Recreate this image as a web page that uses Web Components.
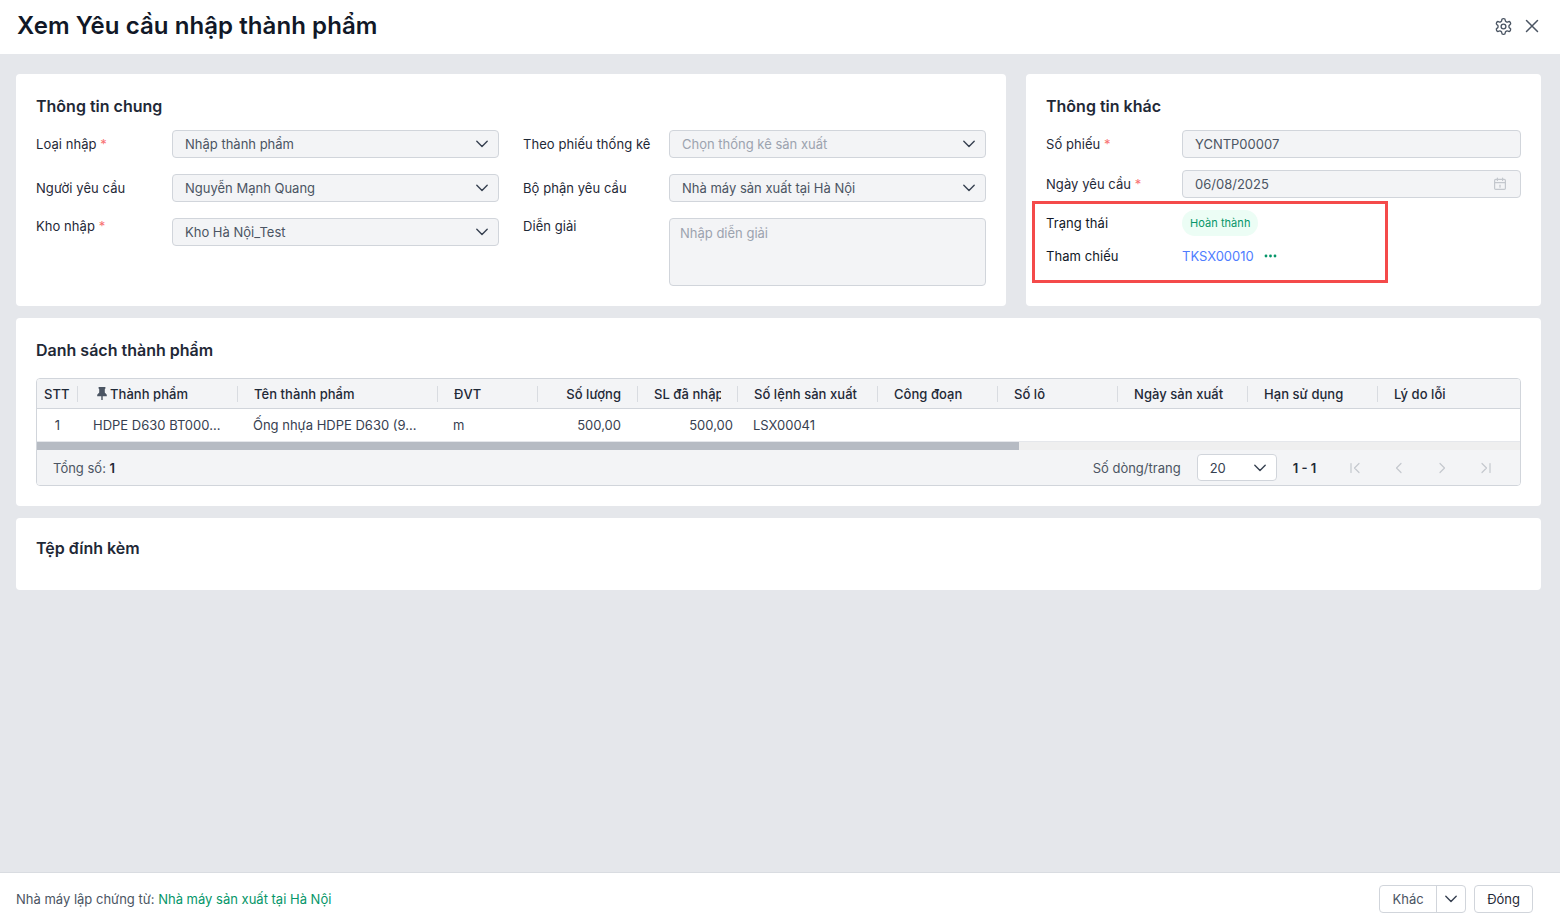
<!DOCTYPE html>
<html lang="vi">
<head>
    <meta charset="UTF-8">
    <title>Xem Yêu cầu nhập thành phẩm</title>
    <style>
        html, body {
            margin: 0;
            height: 922px;
            overflow: hidden;
        }
        body {
            background-color: #e5e7eb;
            color: #1f2937;
            font: 13px/20px Inter, "Noto Sans", "Liberation Sans", sans-serif;
            display: flex;
            flex-direction: column;
        }
        main {
            flex: 1;
            display: flex;
            flex-direction: column;
            gap: 12px;
            padding: 20px 19px 0 16px;
        }
        .top {
            display: flex;
            gap: 20px;
        }
        .grow { flex: 1; }
    </style>
    <script>
        const chevron = `<svg width="14" height="14" viewBox="0 0 14 14" fill="none" stroke="#374151" stroke-width="1.4" stroke-linecap="round" stroke-linejoin="round"><path d="M1.8 4.2 7 9.4l5.2-5.2"/></svg>`;

        class AppHeader extends HTMLElement {
            constructor() {
                super().attachShadow({mode: 'open'});
            }

            connectedCallback() {
                this.shadowRoot.innerHTML = `
                    <style>
                        :host {
                            display: flex;
                            align-items: center;
                            justify-content: space-between;
                            box-sizing: border-box;
                            height: 54px;
                            flex: none;
                            padding: 0 20px 2px 17px;
                            background: #fff;
                        }
                        h1 {
                            margin: 0;
                            font-size: 24px;
                            line-height: 32px;
                            font-weight: 600;
                            letter-spacing: .07px;
                            color: #111827;
                        }
                        div { display: flex; align-items: center; gap: 11px; }
                        svg { display: block; }
                    </style>
                    <h1><slot></slot></h1>
                    <div>
                        <svg width="19" height="19" viewBox="0 0 24 24" fill="none" stroke="#4b5563" stroke-width="1.7" stroke-linecap="round" stroke-linejoin="round">
                            <path d="M12.22 2h-.44a2 2 0 0 0-2 2v.18a2 2 0 0 1-1 1.73l-.43.25a2 2 0 0 1-2 0l-.15-.08a2 2 0 0 0-2.73.73l-.22.38a2 2 0 0 0 .73 2.73l.15.1a2 2 0 0 1 1 1.72v.51a2 2 0 0 1-1 1.74l-.15.09a2 2 0 0 0-.73 2.73l.22.38a2 2 0 0 0 2.73.73l.15-.08a2 2 0 0 1 2 0l.43.25a2 2 0 0 1 1 1.73V20a2 2 0 0 0 2 2h.44a2 2 0 0 0 2-2v-.18a2 2 0 0 1 1-1.73l.43-.25a2 2 0 0 1 2 0l.15.08a2 2 0 0 0 2.73-.73l.22-.39a2 2 0 0 0-.73-2.73l-.15-.08a2 2 0 0 1-1-1.74v-.5a2 2 0 0 1 1-1.74l.15-.09a2 2 0 0 0 .73-2.73l-.22-.38a2 2 0 0 0-2.73-.73l-.15.08a2 2 0 0 1-2 0l-.43-.25a2 2 0 0 1-1-1.73V4a2 2 0 0 0-2-2z"/>
                            <circle cx="12" cy="12" r="3"/>
                        </svg>
                        <svg width="16" height="16" viewBox="0 0 16 16" fill="none" stroke="#4b5563" stroke-width="1.5" stroke-linecap="round"><path d="M2.500 2.500l11 11M13.500 2.500l-11 11"/></svg>
                    </div>`;
            }
        }
        customElements.define('app-header', AppHeader);

        class FormCard extends HTMLElement {
            constructor() {
                super().attachShadow({mode: 'open'});
            }

            connectedCallback() {
                this.shadowRoot.innerHTML = `
                    <style>
                        :host {
                            display: block;
                            position: relative;
                            box-sizing: border-box;
                            padding: 20px;
                            background: #fff;
                            border-radius: 4px;
                        }
                        h2 {
                            margin: 0 0 var(--head-gap, 12px);
                            font-size: 16px;
                            line-height: 24px;
                            font-weight: 600;
                            color: #1f2937;
                        }
                    </style>
                    <h2>${this.getAttribute('heading')}</h2>
                    <slot></slot>`;
            }
        }
        customElements.define('form-card', FormCard);

        class FieldRow extends HTMLElement {
            constructor() {
                super().attachShadow({mode: 'open'});
            }

            connectedCallback() {
                const req = this.hasAttribute('required') ? ' <i>*</i>' : '';
                const top = this.hasAttribute('top');
                this.shadowRoot.innerHTML = `
                    <style>
                        :host {
                            display: flex;
                            align-items: ${top ? 'flex-start' : 'center'};
                        }
                        label {
                            flex: none;
                            width: var(--label-width, 136px);
                            margin-top: ${top ? '-2px' : '0'};
                            color: var(--label-color, #1f2937);
                            letter-spacing: .06px;
                            white-space: nowrap;
                        }
                        i { font-style: normal; color: #f87171; letter-spacing: 0; }
                        div { flex: 1; min-width: 0; }
                    </style>
                    <label>${this.getAttribute('label')}${req}</label>
                    <div><slot></slot></div>`;
            }
        }
        customElements.define('field-row', FieldRow);

        class SelectBox extends HTMLElement {
            constructor() {
                super().attachShadow({mode: 'open'});
            }

            connectedCallback() {
                const icon = this.getAttribute('icon');
                let right = chevron;
                if (icon === 'none') right = '';
                if (icon === 'date') {
                    right = `<svg style="margin-right:4px" width="14" height="14" viewBox="0 0 14 14" fill="none" stroke="#c3c7cd" stroke-width="1.2" stroke-linecap="round"><rect x="1.600" y="2.400" width="10.800" height="10" rx="1.200"/><path d="M1.600 5.600h10.800M4.400 1v2.400M9.600 1v2.400"/><path d="M7 8.200v2"/></svg>`;
                }
                this.shadowRoot.innerHTML = `
                    <style>
                        :host {
                            display: flex;
                            align-items: center;
                            justify-content: space-between;
                            box-sizing: border-box;
                            height: 28px;
                            padding: 0 9px 0 12px;
                            background: #f3f4f6;
                            border: 1px solid #d1d5db;
                            border-radius: 4px;
                            color: #4b5563;
                        }
                        :host([placeholder]) { color: #9ca3af; }
                        svg { display: block; }
                    </style>
                    <span><slot></slot></span>${right}`;
            }
        }
        customElements.define('select-box', SelectBox);

        class TextBlock extends HTMLElement {
            constructor() {
                super().attachShadow({mode: 'open'}).innerHTML = `
                    <style>
                        :host {
                            display: block;
                            box-sizing: border-box;
                            height: 68px;
                            padding: 4px 10px;
                            background: #f3f4f6;
                            border: 1px solid #d1d5db;
                            border-radius: 4px;
                            color: #9ca3af;
                        }
                    </style>
                    <slot></slot>`;
            }
        }
        customElements.define('text-block', TextBlock);

        class StatusBadge extends HTMLElement {
            constructor() {
                super().attachShadow({mode: 'open'}).innerHTML = `
                    <style>
                        :host {
                            display: inline-flex;
                            align-items: center;
                            height: 26px;
                            padding: 0 8px;
                            border-radius: 13px;
                            background: #ecfdf5;
                            color: #059669;
                            font-size: 11px;
                            letter-spacing: .05px;
                            vertical-align: top;
                        }
                    </style>
                    <slot></slot>`;
            }
        }
        customElements.define('status-badge', StatusBadge);

        class RefLink extends HTMLElement {
            constructor() {
                super().attachShadow({mode: 'open'}).innerHTML = `
                    <style>
                        :host { display: flex; align-items: center; gap: 10px; color: #4f7cff; }
                        svg { display: block; }
                    </style>
                    <span><slot></slot></span>
                    <svg width="13" height="4" viewBox="0 0 13 4" fill="#059669"><circle cx="2" cy="2" r="1.400"/><circle cx="6.500" cy="2" r="1.400"/><circle cx="11" cy="2" r="1.400"/></svg>`;
            }
        }
        customElements.define('ref-link', RefLink);

        class MarkBox extends HTMLElement {
            constructor() {
                super().attachShadow({mode: 'open'}).innerHTML = `
                    <style>
                        :host {
                            position: absolute;
                            left: 6px;
                            top: 127px;
                            width: 356px;
                            height: 82px;
                            box-sizing: border-box;
                            border: 3px solid #f44a4a;
                            pointer-events: none;
                        }
                    </style>`;
            }
        }
        customElements.define('mark-box', MarkBox);

        const COLUMNS = [
            {name: 'STT', w: 41, pad: 7},
            {name: 'Thành phẩm', w: 160, pin: true},
            {name: 'Tên thành phẩm', w: 200},
            {name: 'ĐVT', w: 100},
            {name: 'Số lượng', w: 100, right: true},
            {name: 'SL đã nhập', w: 100},
            {name: 'Số lệnh sản xuất', w: 140},
            {name: 'Công đoạn', w: 120},
            {name: 'Số lô', w: 120},
            {name: 'Ngày sản xuất', w: 130},
            {name: 'Hạn sử dụng', w: 130},
            {name: 'Lý do lỗi', w: 0}
        ];

        class DataTable extends HTMLElement {
            constructor() {
                super().attachShadow({mode: 'open'});
            }

            connectedCallback() {
                const tpl = COLUMNS.map(c => c.w ? c.w + 'px' : '1fr').join(' ');
                const heads = COLUMNS.map(c => {
                    const pin = c.pin ? `<svg width="10" height="13" viewBox="0 0 10 13" fill="#4b5563"><path d="M1.600 0h6.800v1.600L7.800 2.200v3.200L9.800 7.800v1.400H5.700V13H4.300V9.200H.2V7.800l2-2.400V2.200L1.600 1.600z"/></svg>` : '';
                    return `<div class="th ${c.right ? 'r' : ''} ${c.pin ? 'pin' : ''}" ${c.pad ? `style="padding:0 ${c.pad}px"` : ''}>${pin}<span>${c.name}</span></div>`;
                }).join('');
                this.shadowRoot.innerHTML = `
                    <style>
                        :host {
                            display: block;
                            border: 1px solid #d1d5db;
                            border-radius: 4px;
                            overflow: hidden;
                            background: #fff;
                        }
                        .head, .row {
                            display: grid;
                            grid-template-columns: ${tpl};
                            align-items: center;
                        }
                        .head {
                            height: 29px;
                            background: #f3f4f6;
                            border-bottom: 1px solid #d1d5db;
                            font-weight: 500;
                            letter-spacing: .05px;
                            color: #1f2937;
                        }
                        .th {
                            box-sizing: border-box;
                            height: 16px;
                            line-height: 16px;
                            padding: 0 16px 0 16px;
                            border-right: 1px solid #d9dce1;
                            white-space: nowrap;
                        }
                        .th span { display: block; overflow: hidden; }
                        .th:last-child { border-right: 0; }
                        .th.r { text-align: right; }
                        .th.pin { display: flex; align-items: center; gap: 3px; padding-left: 19px; }
                        .row {
                            box-sizing: border-box;
                            height: 33px;
                            border-bottom: 1px solid #e5e7eb;
                            color: #374151;
                        }
                        .row div { padding-left: 15px; white-space: nowrap; }
                        .row .n { text-align: center; padding: 0; }
                        .row .num { text-align: right; padding: 0 17px 0 0; }
                        .row .num2 { text-align: right; padding: 0 5px 0 0; }
                        .bar {
                            height: 8px;
                            background: #efefef;
                        }
                        .bar div { width: 982px; height: 100%; background: #b6bbc3; }
                    </style>
                    <div class="head">${heads}</div>
                    <div class="row">
                        <div class="n">1</div>
                        <div>HDPE D630 BT000...</div>
                        <div>Ống nhựa HDPE D630 (9...</div>
                        <div>m</div>
                        <div class="num">500,00</div>
                        <div class="num2">500,00</div>
                        <div>LSX00041</div>
                        <div></div><div></div><div></div><div></div><div></div>
                    </div>
                    <div class="bar"><div></div></div>
                    <slot></slot>`;
            }
        }
        customElements.define('data-table', DataTable);

        class TablePager extends HTMLElement {
            constructor() {
                super().attachShadow({mode: 'open'});
            }

            connectedCallback() {
                const stroke = 'fill="none" stroke="#c4c8ce" stroke-width="1.2" stroke-linecap="round" stroke-linejoin="round"';
                this.shadowRoot.innerHTML = `
                    <style>
                        :host {
                            display: flex;
                            align-items: center;
                            height: 35px;
                            padding: 0 0 0 16px;
                            background: #f3f4f6;
                            color: #4b5563;
                        }
                        b { font-weight: 600; color: #1f2937; }
                        .total { flex: 1; }
                        .size {
                            display: flex;
                            align-items: center;
                            justify-content: space-between;
                            box-sizing: border-box;
                            width: 80px;
                            height: 27px;
                            margin: 0 16px;
                            padding: 0 9px 0 12px;
                            background: #fff;
                            border: 1px solid #d1d5db;
                            border-radius: 4px;
                            color: #374151;
                        }
                        .nav { display: flex; margin: 0 0 0 17px; }
                        .nav span { display: flex; justify-content: center; width: 43.7px; }
                        svg { display: block; }
                    </style>
                    <span class="total">Tổng số: <b>1</b></span>
                    <span>Số dòng/trang</span>
                    <div class="size"><span>20</span>${chevron}</div>
                    <b>1 - 1</b>
                    <div class="nav">
                        <span><svg width="12" height="12" viewBox="0 0 12 12" ${stroke}><path d="M2 1.500v9M10 1.500 5.500 6l4.500 4.500"/></svg></span>
                        <span><svg width="12" height="12" viewBox="0 0 12 12" ${stroke}><path d="M8 1.500 3.500 6 8 10.500"/></svg></span>
                        <span><svg width="12" height="12" viewBox="0 0 12 12" ${stroke}><path d="M4 1.500 8.500 6 4 10.500"/></svg></span>
                        <span style="margin-right:12px"><svg width="12" height="12" viewBox="0 0 12 12" ${stroke}><path d="M10 1.500v9M2 1.500 6.500 6 2 10.500"/></svg></span>
                    </div>`;
            }
        }
        customElements.define('table-pager', TablePager);

        class AppFooter extends HTMLElement {
            constructor() {
                super().attachShadow({mode: 'open'});
            }

            connectedCallback() {
                this.shadowRoot.innerHTML = `
                    <style>
                        :host {
                            display: flex;
                            align-items: center;
                            justify-content: space-between;
                            box-sizing: border-box;
                            height: 50px;
                            flex: none;
                            padding: 2px 27px 0 16px;
                            background: #fff;
                            border-top: 1px solid #d9dce1;
                            color: #4b5563;
                        }
                        em { font-style: normal; color: #059669; }
                        .acts { display: flex; gap: 8px; }
                        .btn {
                            display: flex;
                            align-items: center;
                            box-sizing: border-box;
                            height: 28px;
                            background: #fff;
                            border: 1px solid #d1d5db;
                            border-radius: 4px;
                        }
                        .btn span { padding: 0 12px; }
                        .more span { width: 57px; box-sizing: border-box; padding: 0; text-align: center; border-right: 1px solid #d1d5db; line-height: 26px; }
                        .more svg { margin: 0 7px; display: block; }
                        .close { color: #1f2937; }
                    </style>
                    <div>Nhà máy lập chứng từ: <em>Nhà máy sản xuất tại Hà Nội</em></div>
                    <div class="acts">
                        <div class="btn more"><span>Khác</span>${chevron}</div>
                        <div class="btn close"><span>Đóng</span></div>
                    </div>`;
            }
        }
        customElements.define('app-footer', AppFooter);

        class FormGrid extends HTMLElement {
            constructor() {
                super().attachShadow({mode: 'open'}).innerHTML = `
                    <style>
                        :host {
                            display: grid;
                            grid-template-columns: 463px 463px;
                            column-gap: 24px;
                            align-items: start;
                        }
                        .col { display: flex; flex-direction: column; gap: 16px; }
                    </style>
                    <div class="col"><slot name="left"></slot></div>
                    <div class="col" style="--label-width:146px"><slot name="right"></slot></div>`;
            }
        }
        customElements.define('form-grid', FormGrid);

        class FieldStack extends HTMLElement {
            constructor() {
                super().attachShadow({mode: 'open'}).innerHTML = `
                    <style>
                        :host { display: flex; flex-direction: column; gap: 12px; }
                    </style>
                    <slot></slot>`;
            }
        }
        customElements.define('field-stack', FieldStack);
    </script>
</head>
<body>
    <app-header>Xem Yêu cầu nhập thành phẩm</app-header>
    <main>
        <div class="top">
            <form-card heading="Thông tin chung" style="width:990px;height:232px">
                <form-grid>
                    <field-row slot="left" label="Loại nhập" required><select-box>Nhập thành phẩm</select-box></field-row>
                    <field-row slot="left" label="Người yêu cầu"><select-box>Nguyễn Mạnh Quang</select-box></field-row>
                    <field-row slot="left" label="Kho nhập" required top><select-box>Kho Hà Nội_Test</select-box></field-row>
                    <field-row slot="right" label="Theo phiếu thống kê"><select-box placeholder>Chọn thống kê sản xuất</select-box></field-row>
                    <field-row slot="right" label="Bộ phận yêu cầu"><select-box>Nhà máy sản xuất tại Hà Nội</select-box></field-row>
                    <field-row slot="right" label="Diễn giải" top><text-block>Nhập diễn giải</text-block></field-row>
                </form-grid>
            </form-card>
            <form-card heading="Thông tin khác" style="width:515px;height:232px">
                <field-stack>
                    <field-row label="Số phiếu" required><select-box icon="none">YCNTP00007</select-box></field-row>
                    <field-row label="Ngày yêu cầu" required><select-box icon="date">06/08/2025</select-box></field-row>
                    <field-row label="Trạng thái" style="--label-color:#111827"><status-badge>Hoàn thành</status-badge></field-row>
                    <field-row label="Tham chiếu" style="--label-color:#111827;margin-top:-2px"><ref-link>TKSX00010</ref-link></field-row>
                </field-stack>
                <mark-box></mark-box>
            </form-card>
        </div>
        <form-card heading="Danh sách thành phẩm" style="height:188px;--head-gap:16px">
            <data-table><table-pager></table-pager></data-table>
        </form-card>
        <form-card heading="Tệp đính kèm" style="height:72px;padding-top:18px"></form-card>
        <div class="grow"></div>
    </main>
    <app-footer></app-footer>
</body>
</html>
